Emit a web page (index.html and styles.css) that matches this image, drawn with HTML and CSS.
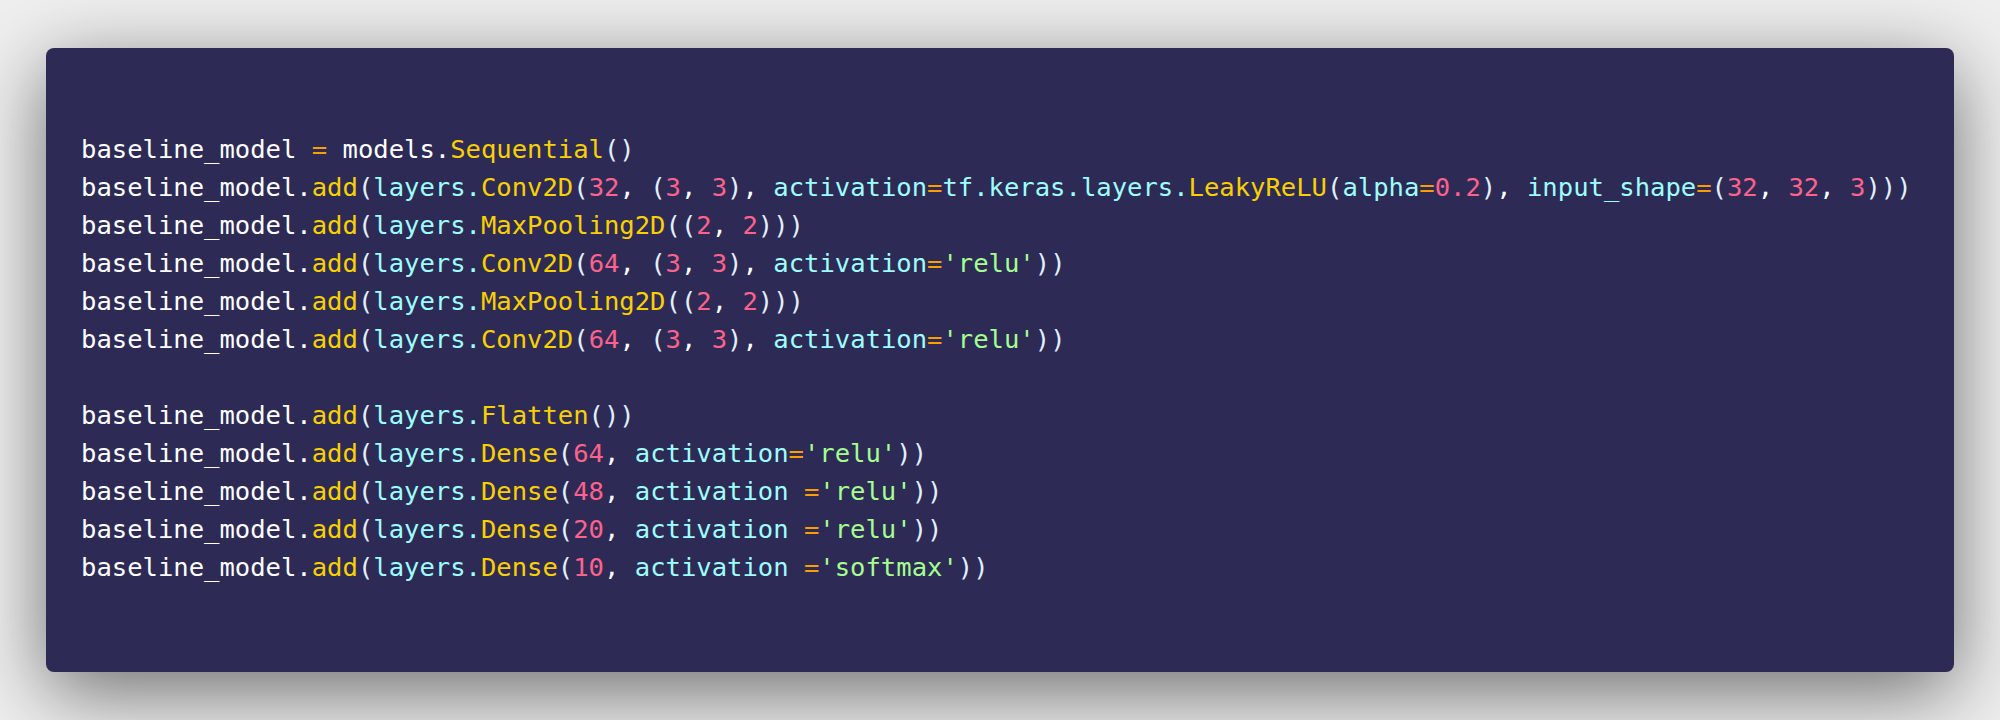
FILE: index.html
```html
<!DOCTYPE html>
<html lang="en">
<head>
<meta charset="utf-8">
<title>Code</title>
<link rel="stylesheet" href="styles.css">
</head>
<body>
<div class="frame">
  <div class="card">
<pre class="code"><span class="w">baseline_model</span> <span class="op">=</span> <span class="w">models.</span><span class="fn">Sequential</span><span class="p">()</span>
<span class="w">baseline_model.</span><span class="fn">add</span><span class="p">(</span><span class="v">layers.</span><span class="fn">Conv2D</span><span class="p">(</span><span class="n">32</span><span class="w">, </span><span class="p">(</span><span class="n">3</span><span class="w">, </span><span class="n">3</span><span class="p">)</span><span class="w">, </span><span class="v">activation</span><span class="op">=</span><span class="v">tf.keras.layers.</span><span class="fn">LeakyReLU</span><span class="p">(</span><span class="v">alpha</span><span class="op">=</span><span class="n">0.2</span><span class="p">)</span><span class="w">, </span><span class="v">input_shape</span><span class="op">=</span><span class="p">(</span><span class="n">32</span><span class="w">, </span><span class="n">32</span><span class="w">, </span><span class="n">3</span><span class="p">)))</span>
<span class="w">baseline_model.</span><span class="fn">add</span><span class="p">(</span><span class="v">layers.</span><span class="fn">MaxPooling2D</span><span class="p">((</span><span class="n">2</span><span class="w">, </span><span class="n">2</span><span class="p">)))</span>
<span class="w">baseline_model.</span><span class="fn">add</span><span class="p">(</span><span class="v">layers.</span><span class="fn">Conv2D</span><span class="p">(</span><span class="n">64</span><span class="w">, </span><span class="p">(</span><span class="n">3</span><span class="w">, </span><span class="n">3</span><span class="p">)</span><span class="w">, </span><span class="v">activation</span><span class="op">=</span><span class="s">'relu'</span><span class="p">))</span>
<span class="w">baseline_model.</span><span class="fn">add</span><span class="p">(</span><span class="v">layers.</span><span class="fn">MaxPooling2D</span><span class="p">((</span><span class="n">2</span><span class="w">, </span><span class="n">2</span><span class="p">)))</span>
<span class="w">baseline_model.</span><span class="fn">add</span><span class="p">(</span><span class="v">layers.</span><span class="fn">Conv2D</span><span class="p">(</span><span class="n">64</span><span class="w">, </span><span class="p">(</span><span class="n">3</span><span class="w">, </span><span class="n">3</span><span class="p">)</span><span class="w">, </span><span class="v">activation</span><span class="op">=</span><span class="s">'relu'</span><span class="p">))</span>

<span class="w">baseline_model.</span><span class="fn">add</span><span class="p">(</span><span class="v">layers.</span><span class="fn">Flatten</span><span class="p">())</span>
<span class="w">baseline_model.</span><span class="fn">add</span><span class="p">(</span><span class="v">layers.</span><span class="fn">Dense</span><span class="p">(</span><span class="n">64</span><span class="w">, </span><span class="v">activation</span><span class="op">=</span><span class="s">'relu'</span><span class="p">))</span>
<span class="w">baseline_model.</span><span class="fn">add</span><span class="p">(</span><span class="v">layers.</span><span class="fn">Dense</span><span class="p">(</span><span class="n">48</span><span class="w">, </span><span class="v">activation </span><span class="op">=</span><span class="s">'relu'</span><span class="p">))</span>
<span class="w">baseline_model.</span><span class="fn">add</span><span class="p">(</span><span class="v">layers.</span><span class="fn">Dense</span><span class="p">(</span><span class="n">20</span><span class="w">, </span><span class="v">activation </span><span class="op">=</span><span class="s">'relu'</span><span class="p">))</span>
<span class="w">baseline_model.</span><span class="fn">add</span><span class="p">(</span><span class="v">layers.</span><span class="fn">Dense</span><span class="p">(</span><span class="n">10</span><span class="w">, </span><span class="v">activation </span><span class="op">=</span><span class="s">'softmax'</span><span class="p">))</span></pre>
  </div>
</div>
</body>
</html>
```

FILE: styles.css
```css
html, body {
  margin: 0;
  padding: 0;
  background: #efefef;
}

.frame {
  width: 2000px;
  height: 720px;
  box-sizing: border-box;
  padding: 48px 46px;
  overflow: hidden;
}

.card {
  height: 624px;
  box-sizing: border-box;
  background: #2d2b55;
  border-radius: 8px;
  box-shadow: 0 20px 80px rgba(0, 0, 0, 0.55);
  padding: 82px 34px 0 35px;
}

.code {
  margin: 0;
  font-family: "DejaVu Sans Mono", "Liberation Mono", monospace;
  font-size: 25.55px;
  line-height: 38px;
  color: #ffffff;
  white-space: pre;
}

.w { color: #ffffff; }
.op { color: #ff9d00; }
.fn { color: #fad000; }
.p { color: #e1efff; }
.v { color: #9effff; }
.n { color: #ff628c; }
.s { color: #a5ff90; }
```
